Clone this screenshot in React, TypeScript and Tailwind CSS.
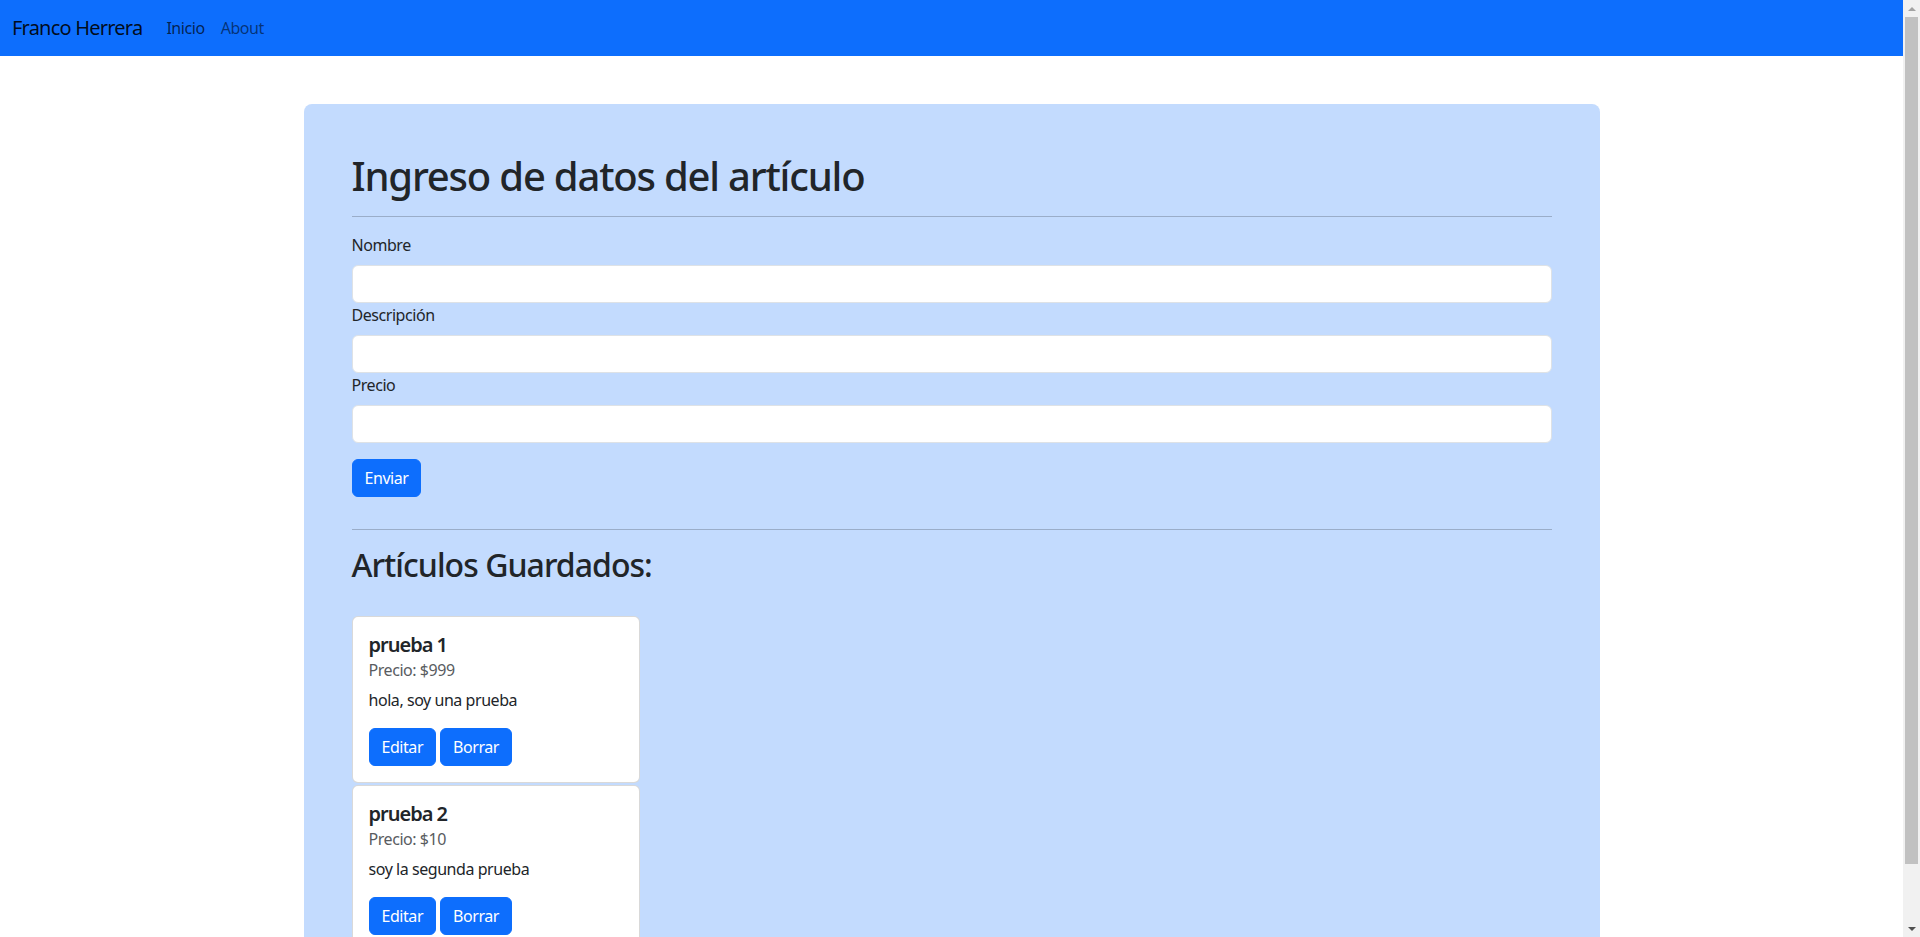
import { useState } from 'react';

type Articulo = {
  id: number;
  nombre: string;
  descripcion: string;
  precio: string;
};

const initialArticulos: Articulo[] = [
  { id: 1, nombre: 'prueba 1', descripcion: 'hola, soy una prueba', precio: '999' },
  { id: 2, nombre: 'prueba 2', descripcion: 'soy la segunda prueba', precio: '10' },
];

export default function App() {
  const [articulos, setArticulos] = useState<Articulo[]>(initialArticulos);
  const [nombre, setNombre] = useState('');
  const [descripcion, setDescripcion] = useState('');
  const [precio, setPrecio] = useState('');

  const handleSubmit = (e: React.FormEvent) => {
    e.preventDefault();
    if (!nombre) return;
    setArticulos([...articulos, { id: Date.now(), nombre, descripcion, precio }]);
    setNombre('');
    setDescripcion('');
    setPrecio('');
  };

  const handleDelete = (id: number) => {
    setArticulos(articulos.filter((a) => a.id !== id));
  };

  const inputClass =
    'block w-full h-[38px] px-3 bg-white border border-[#dee2e6] rounded-[6px] text-[16px] text-[#212529] focus:outline-none';
  const btnClass =
    'h-[38px] px-3 bg-[#0d6efd] border border-[#0d6efd] rounded-[6px] text-white text-[16px] hover:bg-[#0b5ed7]';

  return (
    <div className="min-h-screen bg-white font-['Noto_Sans',sans-serif] tracking-[-0.028em] text-[#212529]">
      <div className="mr-[17px]">
        {/* Navbar */}
        <nav className="bg-[#0d6efd] h-[56px] flex items-center px-3">
          <a href="#" className="text-[20px] leading-[30px] tracking-[-0.039em] text-black/90 mr-4">
            Franco Herrera
          </a>
          <a href="#" className="px-2 text-[16px] leading-6 text-black/70">
            Inicio
          </a>
          <a href="#" className="px-2 text-[16px] leading-6 text-black/55">
            About
          </a>
        </nav>

        <div className="w-[1320px] mx-auto px-3 mt-12">
          <div className="bg-[#c3dbfe] rounded-lg p-12">
            <h1 className="text-[40px] leading-[48px] font-medium tracking-[-0.03em] mb-2">
              Ingreso de datos del artículo
            </h1>
            <hr className="border-t border-[#9aadc9] my-4" />

            <form onSubmit={handleSubmit}>
              <label className="block text-[16px] leading-6 mb-2">Nombre</label>
              <input
                type="text"
                value={nombre}
                onChange={(e) => setNombre(e.target.value)}
                className={inputClass}
              />
              <label className="block text-[16px] leading-6 mb-2">Descripción</label>
              <input
                type="text"
                value={descripcion}
                onChange={(e) => setDescripcion(e.target.value)}
                className={inputClass}
              />
              <label className="block text-[16px] leading-6 mb-2">Precio</label>
              <input
                type="text"
                value={precio}
                onChange={(e) => setPrecio(e.target.value)}
                className={inputClass}
              />
              <button type="submit" className={`mt-4 ${btnClass}`}>
                Enviar
              </button>
            </form>

            <hr className="border-t border-[#9aadc9] mt-8 mb-4" />
            <h2 className="text-[32px] leading-[38px] font-medium tracking-[-0.03em] mb-8">
              Artículos Guardados:
            </h2>

            <div className="flex flex-col gap-[2px]">
              {articulos.map((a) => (
                <div
                  key={a.id}
                  className="w-[288px] bg-white border border-black/15 rounded-[6px] p-4"
                >
                  <h5 className="text-[20px] leading-6 font-semibold tracking-[-0.05em] mb-2">{a.nombre}</h5>
                  <h6 className="text-[16px] leading-[19px] font-normal text-[#595c5f] -mt-1 mb-2">
                    Precio: ${a.precio}
                  </h6>
                  <p className="text-[16px] leading-6 mb-4">{a.descripcion}</p>
                  <div className="flex gap-1">
                    <button className={btnClass}>Editar</button>
                    <button onClick={() => handleDelete(a.id)} className={btnClass}>
                      Borrar
                    </button>
                  </div>
                </div>
              ))}
            </div>
          </div>
        </div>
      </div>

      {/* Browser scrollbar */}
      <div className="fixed top-0 right-0 w-[17px] h-screen bg-[#f1f1f1] flex flex-col">
        <div className="h-[17px] flex items-center justify-center">
          <div className="w-0 h-0 border-l-[4px] border-r-[4px] border-b-[4px] border-l-transparent border-r-transparent border-b-[#a3a3a3]" />
        </div>
        <div className="h-[847px] mx-[2px] bg-[#c1c1c1]" />
        <div className="flex-1" />
        <div className="h-[17px] flex items-center justify-center">
          <div className="w-0 h-0 border-l-[4px] border-r-[4px] border-t-[4px] border-l-transparent border-r-transparent border-t-[#505050]" />
        </div>
      </div>
    </div>
  );
}
